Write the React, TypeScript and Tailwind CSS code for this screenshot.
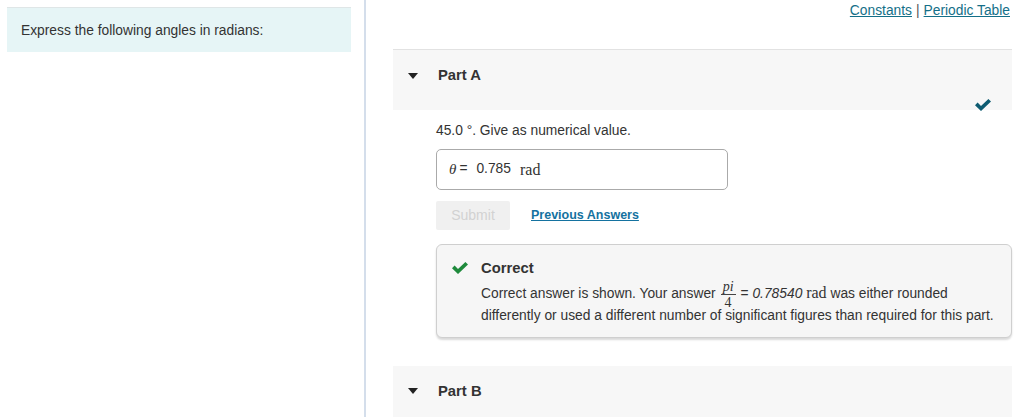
function Caret() {
  return (
    <svg width="10" height="6" viewBox="0 0 10 6" className="shrink-0">
      <path d="M0 0 H10 L5 6 Z" fill="#222" />
    </svg>
  );
}

function Tick({ className }: { className?: string }) {
  return (
    <svg width="16" height="12" viewBox="0 0 16 12" className={className}>
      <polygon points="0,6.2 2.6,3.6 6,7 13.4,0 16,2.6 6,12" fill="currentColor" />
    </svg>
  );
}

function Frac() {
  return (
    <span className="inline-flex flex-col items-center align-middle -my-2 mx-[5px]" style={{ fontFamily: "'Liberation Serif', serif" }}>
      <span className="italic text-[14px] leading-[11px] px-[2px] pb-[2px]">pi</span>
      <span className="w-full border-t border-[#444]" />
      <span className="text-[14px] leading-[11px] pt-[2px]">4</span>
    </span>
  );
}

export default function App() {
  return (
    <div className="flex w-[1024px] h-[417px] overflow-hidden bg-white text-[#333]" style={{ fontFamily: "'Liberation Sans', Arial, sans-serif" }}>
      {/* Left: intro */}
      <div className="w-[364px] shrink-0 pl-[7px] pt-[7px] pr-[13px]">
        <div className="bg-[#e6f5f6] border-t border-[#dfe6e7] h-[45px] flex items-center pl-[14px] pt-[3px] text-[13.8px]">
          Express the following angles in radians:
        </div>
      </div>
      <div className="w-[2px] shrink-0 bg-[#d4deeb]" />

      {/* Right: parts */}
      <div className="flex-1 pl-[27px] pr-[12px]">
        <div className="h-[49px] flex justify-end pt-[3px] pr-[2px] text-[13.8px] leading-[16px]">
          <a href="#" className="text-[#146f88] underline">Constants</a>
          <span className="mx-[4px] text-[#555]">|</span>
          <a href="#" className="text-[#146f88] underline">Periodic Table</a>
        </div>

        {/* Part A */}
        <div className="relative h-[61px] bg-[#f7f7f7] border-t border-[#e2e2e2] flex items-center pl-[15px] gap-[20px] pb-[9px]">
          <Caret />
          <span className="font-bold text-[14.8px]">Part A</span>
          <Tick className="absolute right-[21px] -bottom-[1px] text-[#0d5b71]" />
        </div>

        <div className="pl-[43px]">
          <div className="text-[13.8px] mt-[13px] leading-[16px]">45.0 °. Give as numerical value.</div>

          <div className="mt-[10px] w-[292px] h-[41px] border border-[#aaa] rounded-[5px] flex items-center pl-[12px] text-[13.8px]">
            <span className="italic text-[15px]" style={{ fontFamily: "'Liberation Serif', serif" }}>θ</span>
            <span className="ml-[3px]">=</span>
            <span className="ml-[9px]">0.785</span>
            <span className="ml-[9px] text-[16px]" style={{ fontFamily: "'Liberation Serif', serif" }}>rad</span>
          </div>

          <div className="mt-[11px] flex items-center">
            <button className="w-[74px] h-[29px] bg-[#f0f0f0] text-[#d2d2d2] text-[14px] rounded-[2px]">Submit</button>
            <a href="#" className="ml-[21px] text-[12.5px] font-bold text-[#1472a0] underline">Previous Answers</a>
          </div>

          <div className="mt-[14px] h-[94px] bg-[#f6f6f6] border border-[#cfcfcf] rounded-[6px] shadow-[0_2px_2px_rgba(0,0,0,0.15)] flex pl-[15px] pt-[14px]">
            <Tick className="text-[#1f8a3c] shrink-0 mt-[3px]" />
            <div className="ml-[13px]">
              <div className="font-bold text-[14.8px] leading-[18px]">Correct</div>
              <div className="text-[13.8px] leading-[22px] mt-[5px]">
                Correct answer is shown. Your answer<Frac />= <span className="italic">0.78540</span>{" "}
                <span className="text-[16px]" style={{ fontFamily: "'Liberation Serif', serif" }}>rad</span> was either rounded
                <br />
                differently or used a different number of significant figures than required for this part.
              </div>
            </div>
          </div>
        </div>

        {/* Part B */}
        <div className="mt-[28px] h-[60px] bg-[#f7f7f7] flex items-center pl-[15px] gap-[20px] pb-[10px]">
          <Caret />
          <span className="font-bold text-[14.8px]">Part B</span>
        </div>
      </div>
    </div>
  );
}
